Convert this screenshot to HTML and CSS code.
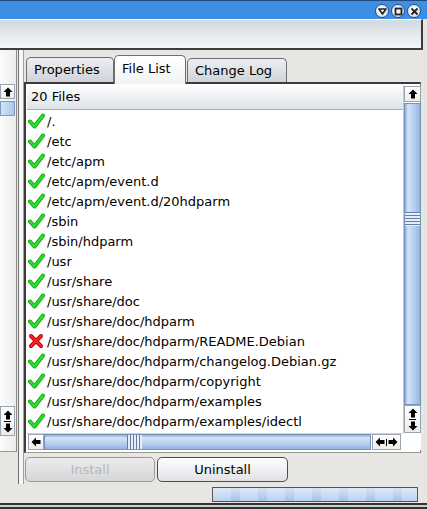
FILE: index.html
```html
<!DOCTYPE html>
<html>
<head>
<meta charset="utf-8">
<link rel="stylesheet" href="styles.css">
</head>
<body>
<div class="titlebar">
  <span class="wbtn"><svg width="9" height="9" viewBox="0 0 9 9"><polygon points="1,2 8,2 4.5,7" fill="none" stroke="#222" stroke-width="1.6" stroke-linejoin="round"/></svg></span>
  <span class="wbtn"><svg width="9" height="9" viewBox="0 0 9 9"><rect x="1.5" y="1.5" width="6" height="6" fill="none" stroke="#222" stroke-width="1.8"/></svg></span>
  <span class="wbtn"><svg width="9" height="9" viewBox="0 0 9 9"><path d="M1.5 1.5 L7.5 7.5 M7.5 1.5 L1.5 7.5" stroke="#222" stroke-width="1.8"/></svg></span>
</div>
<div class="toolbar"></div>
<div class="main">
  <div class="leftpane">
    <div class="lscroll">
      <div class="abox up"><svg width="10" height="10" viewBox="0 0 10 10"><polygon points="5,0.5 9.5,5 7,5 7,9.5 3,9.5 3,5 0.5,5" fill="#000"/></svg></div>
      <div class="lthumb"></div>
      <div class="lspace"></div>
      <div class="abox pair">
        <svg width="10" height="10" viewBox="0 0 10 10"><polygon points="5,0.5 9.5,5 7,5 7,9.5 3,9.5 3,5 0.5,5" fill="#000"/></svg>
        <span class="dash"></span>
        <svg width="10" height="10" viewBox="0 0 10 10"><polygon points="5,9.5 9.5,5 7,5 7,0.5 3,0.5 3,5 0.5,5" fill="#000"/></svg>
      </div>
    </div>
  </div>
  <div class="splitter"></div>
  <div class="rightpane">
    <div class="tabs">
      <div class="tab t1">Properties</div>
      <div class="tab t2 sel">File List</div>
      <div class="tab t3">Change Log</div>
    </div>
    <div class="panel">
      <div class="grid">
        <div class="list">
          <div class="lhead">20 Files</div>
          <div class="rows">
            <div class="row"><svg class="ok" width="17" height="16" viewBox="0 0 17 16"><path d="M2 8.5 L6.5 13.5 L15 2.5" fill="none" stroke="#0f9a0f" stroke-width="4" stroke-linejoin="round" stroke-linecap="round"/><path d="M2 8.5 L6.5 13.5 L15 2.5" fill="none" stroke="#2ee02e" stroke-width="2.4" stroke-linejoin="round" stroke-linecap="round"/></svg>/.</div>
            <div class="row"><svg class="ok" width="17" height="16" viewBox="0 0 17 16"><path d="M2 8.5 L6.5 13.5 L15 2.5" fill="none" stroke="#0f9a0f" stroke-width="4" stroke-linejoin="round" stroke-linecap="round"/><path d="M2 8.5 L6.5 13.5 L15 2.5" fill="none" stroke="#2ee02e" stroke-width="2.4" stroke-linejoin="round" stroke-linecap="round"/></svg>/etc</div>
            <div class="row"><svg class="ok" width="17" height="16" viewBox="0 0 17 16"><path d="M2 8.5 L6.5 13.5 L15 2.5" fill="none" stroke="#0f9a0f" stroke-width="4" stroke-linejoin="round" stroke-linecap="round"/><path d="M2 8.5 L6.5 13.5 L15 2.5" fill="none" stroke="#2ee02e" stroke-width="2.4" stroke-linejoin="round" stroke-linecap="round"/></svg>/etc/apm</div>
            <div class="row"><svg class="ok" width="17" height="16" viewBox="0 0 17 16"><path d="M2 8.5 L6.5 13.5 L15 2.5" fill="none" stroke="#0f9a0f" stroke-width="4" stroke-linejoin="round" stroke-linecap="round"/><path d="M2 8.5 L6.5 13.5 L15 2.5" fill="none" stroke="#2ee02e" stroke-width="2.4" stroke-linejoin="round" stroke-linecap="round"/></svg>/etc/apm/event.d</div>
            <div class="row"><svg class="ok" width="17" height="16" viewBox="0 0 17 16"><path d="M2 8.5 L6.5 13.5 L15 2.5" fill="none" stroke="#0f9a0f" stroke-width="4" stroke-linejoin="round" stroke-linecap="round"/><path d="M2 8.5 L6.5 13.5 L15 2.5" fill="none" stroke="#2ee02e" stroke-width="2.4" stroke-linejoin="round" stroke-linecap="round"/></svg>/etc/apm/event.d/20hdparm</div>
            <div class="row"><svg class="ok" width="17" height="16" viewBox="0 0 17 16"><path d="M2 8.5 L6.5 13.5 L15 2.5" fill="none" stroke="#0f9a0f" stroke-width="4" stroke-linejoin="round" stroke-linecap="round"/><path d="M2 8.5 L6.5 13.5 L15 2.5" fill="none" stroke="#2ee02e" stroke-width="2.4" stroke-linejoin="round" stroke-linecap="round"/></svg>/sbin</div>
            <div class="row"><svg class="ok" width="17" height="16" viewBox="0 0 17 16"><path d="M2 8.5 L6.5 13.5 L15 2.5" fill="none" stroke="#0f9a0f" stroke-width="4" stroke-linejoin="round" stroke-linecap="round"/><path d="M2 8.5 L6.5 13.5 L15 2.5" fill="none" stroke="#2ee02e" stroke-width="2.4" stroke-linejoin="round" stroke-linecap="round"/></svg>/sbin/hdparm</div>
            <div class="row"><svg class="ok" width="17" height="16" viewBox="0 0 17 16"><path d="M2 8.5 L6.5 13.5 L15 2.5" fill="none" stroke="#0f9a0f" stroke-width="4" stroke-linejoin="round" stroke-linecap="round"/><path d="M2 8.5 L6.5 13.5 L15 2.5" fill="none" stroke="#2ee02e" stroke-width="2.4" stroke-linejoin="round" stroke-linecap="round"/></svg>/usr</div>
            <div class="row"><svg class="ok" width="17" height="16" viewBox="0 0 17 16"><path d="M2 8.5 L6.5 13.5 L15 2.5" fill="none" stroke="#0f9a0f" stroke-width="4" stroke-linejoin="round" stroke-linecap="round"/><path d="M2 8.5 L6.5 13.5 L15 2.5" fill="none" stroke="#2ee02e" stroke-width="2.4" stroke-linejoin="round" stroke-linecap="round"/></svg>/usr/share</div>
            <div class="row"><svg class="ok" width="17" height="16" viewBox="0 0 17 16"><path d="M2 8.5 L6.5 13.5 L15 2.5" fill="none" stroke="#0f9a0f" stroke-width="4" stroke-linejoin="round" stroke-linecap="round"/><path d="M2 8.5 L6.5 13.5 L15 2.5" fill="none" stroke="#2ee02e" stroke-width="2.4" stroke-linejoin="round" stroke-linecap="round"/></svg>/usr/share/doc</div>
            <div class="row"><svg class="ok" width="17" height="16" viewBox="0 0 17 16"><path d="M2 8.5 L6.5 13.5 L15 2.5" fill="none" stroke="#0f9a0f" stroke-width="4" stroke-linejoin="round" stroke-linecap="round"/><path d="M2 8.5 L6.5 13.5 L15 2.5" fill="none" stroke="#2ee02e" stroke-width="2.4" stroke-linejoin="round" stroke-linecap="round"/></svg>/usr/share/doc/hdparm</div>
            <div class="row"><svg class="ok" width="17" height="16" viewBox="0 0 17 16"><path d="M3 3 L13 13 M13 3 L3 13" fill="none" stroke="#b00000" stroke-width="4" stroke-linecap="round"/><path d="M3 3 L13 13 M13 3 L3 13" fill="none" stroke="#ff2020" stroke-width="2.4" stroke-linecap="round"/></svg>/usr/share/doc/hdparm/README.Debian</div>
            <div class="row"><svg class="ok" width="17" height="16" viewBox="0 0 17 16"><path d="M2 8.5 L6.5 13.5 L15 2.5" fill="none" stroke="#0f9a0f" stroke-width="4" stroke-linejoin="round" stroke-linecap="round"/><path d="M2 8.5 L6.5 13.5 L15 2.5" fill="none" stroke="#2ee02e" stroke-width="2.4" stroke-linejoin="round" stroke-linecap="round"/></svg>/usr/share/doc/hdparm/changelog.Debian.gz</div>
            <div class="row"><svg class="ok" width="17" height="16" viewBox="0 0 17 16"><path d="M2 8.5 L6.5 13.5 L15 2.5" fill="none" stroke="#0f9a0f" stroke-width="4" stroke-linejoin="round" stroke-linecap="round"/><path d="M2 8.5 L6.5 13.5 L15 2.5" fill="none" stroke="#2ee02e" stroke-width="2.4" stroke-linejoin="round" stroke-linecap="round"/></svg>/usr/share/doc/hdparm/copyright</div>
            <div class="row"><svg class="ok" width="17" height="16" viewBox="0 0 17 16"><path d="M2 8.5 L6.5 13.5 L15 2.5" fill="none" stroke="#0f9a0f" stroke-width="4" stroke-linejoin="round" stroke-linecap="round"/><path d="M2 8.5 L6.5 13.5 L15 2.5" fill="none" stroke="#2ee02e" stroke-width="2.4" stroke-linejoin="round" stroke-linecap="round"/></svg>/usr/share/doc/hdparm/examples</div>
            <div class="row"><svg class="ok" width="17" height="16" viewBox="0 0 17 16"><path d="M2 8.5 L6.5 13.5 L15 2.5" fill="none" stroke="#0f9a0f" stroke-width="4" stroke-linejoin="round" stroke-linecap="round"/><path d="M2 8.5 L6.5 13.5 L15 2.5" fill="none" stroke="#2ee02e" stroke-width="2.4" stroke-linejoin="round" stroke-linecap="round"/></svg>/usr/share/doc/hdparm/examples/idectl</div>
          </div>
        </div>
        <div class="vscroll">
          <div class="abox vup"><svg width="10" height="10" viewBox="0 0 10 10"><polygon points="5,0.5 9.5,5 7,5 7,9.5 3,9.5 3,5 0.5,5" fill="#000"/></svg></div>
          <div class="vthumb"><div class="vgrip"></div></div>
          <div class="abox vpair">
            <svg width="10" height="10" viewBox="0 0 10 10"><polygon points="5,0.5 9.5,5 7,5 7,9.5 3,9.5 3,5 0.5,5" fill="#000"/></svg>
            <span class="dash"></span>
            <svg width="10" height="10" viewBox="0 0 10 10"><polygon points="5,9.5 9.5,5 7,5 7,0.5 3,0.5 3,5 0.5,5" fill="#000"/></svg>
          </div>
        </div>
        <div class="hscroll">
          <div class="abox hleft"><svg width="10" height="10" viewBox="0 0 10 10"><polygon points="0.5,5 5,0.5 5,3 9.5,3 9.5,7 5,7 5,9.5" fill="#000"/></svg></div>
          <div class="hthumb"><div class="hgrip"></div></div>
          <div class="abox hpair">
            <svg width="10" height="10" viewBox="0 0 10 10"><polygon points="0.5,5 5,0.5 5,3 9.5,3 9.5,7 5,7 5,9.5" fill="#000"/></svg>
            <span class="vdash"></span>
            <svg width="10" height="10" viewBox="0 0 10 10"><polygon points="9.5,5 5,0.5 5,3 0.5,3 0.5,7 5,7 5,9.5" fill="#000"/></svg>
          </div>
        </div>
        <div class="corner"></div>
      </div>
    </div>
    <div class="buttons">
      <div class="btn disabled">Install</div>
      <div class="btn">Uninstall</div>
    </div>
  </div>
</div>
<div class="status">
  <div class="progress"></div>
</div>
<div class="frame-bottom"></div>
</body>
</html>
```

FILE: styles.css
```css
* { box-sizing: border-box; }
html, body { margin: 0; padding: 0; }
body {
  width: 427px;
  height: 509px;
  overflow: hidden;
  background: #e7e6e3;
  font-family: "DejaVu Sans", "Noto Sans", sans-serif;
  font-size: 13px;
  color: #000;
}
.titlebar {
  height: 19px;
  background: #3d8fe6;
  border-top: 1px solid #224a7c;
  display: flex;
  justify-content: flex-end;
  align-items: center;
  gap: 2px;
  padding: 2px 6px 0 0;
}
.wbtn {
  width: 14px;
  height: 14px;
  border-radius: 50%;
  background: radial-gradient(circle at 40% 35%, #ffffff, #c9d6e6);
  border: 1px solid #2a4f80;
  display: flex;
  align-items: center;
  justify-content: center;
}
.toolbar {
  height: 31px;
  width: 423px;
  background: linear-gradient(#d3d9e1, #f5f6f8);
  border-top: 1px solid #ffffff;
  border-right: 2px solid #3a3a3a;
  border-bottom: 2px solid #3e3e3e;
}
.main {
  display: flex;
  height: 435px;
}
.leftpane {
  width: 17px;
  height: 402px;
  background: linear-gradient(to right, #fbfbfb, #ececec);
  border-right: 1px solid #8c8c8c;
  border-bottom: 1px solid #9a9a9a;
}
.lscroll {
  display: flex;
  flex-direction: column;
  width: 16px;
  height: 100%;
  padding-top: 34px;
}
.abox {
  background: linear-gradient(#ffffff, #ececec);
  border: 1px solid #9aa4b0;
  display: flex;
  align-items: center;
  justify-content: center;
}
.abox.up { height: 15px; width: 15px; }
.lthumb {
  margin-top: 2px;
  height: 15px;
  width: 15px;
  background: linear-gradient(to right, #d5e4f6, #a9c6ec);
  border: 1px solid #7e9cc2;
}
.lspace { flex: 1; }
.abox.pair, .abox.vpair {
  flex-direction: column;
  height: 30px;
  width: 15px;
  gap: 1px;
  margin-bottom: 15px;
}
.dash { width: 7px; height: 1px; background: #000; }
.vdash { width: 1px; height: 7px; background: #000; margin: 0 1px; }
.splitter {
  width: 6px;
  height: 434px;
  margin-left: 1px;
  background: #f6f6f6;
  border-left: 1px solid #707070;
  border-right: 1px solid #a0a0a0;
}
.rightpane {
  width: 398px;
  display: flex;
  flex-direction: column;
}
.tabs {
  height: 32px;
  display: flex;
  align-items: flex-end;
  padding-left: 2px;
}
.tab {
  border: 1px solid #6e6e6e;
  border-bottom: none;
  border-radius: 5px 5px 0 0;
  background: linear-gradient(#eceef2, #cfd4da);
  padding: 0 7px;
  line-height: 24px;
  height: 25px;
}
.tab.t1 { width: 88px; }
.tab.t2 { width: 72px; height: 29px; line-height: 26px; background: linear-gradient(#ffffff, #f3f3f3); margin-bottom: -2px; position: relative; z-index: 1; }
.tab.t3 { width: 100px; height: 24px; line-height: 23px; margin-left: 1px; }
.panel {
  height: 371px;
  width: 397px;
  border-top: 2px solid #3c3c3c;
  border-left: 2px solid #3c3c3c;
  border-right: 1px solid #7a7a7a;
  border-bottom: 1px solid #9a9a9a;
  background: #ffffff;
  padding: 1px 0 0 1px;
}
.grid {
  display: grid;
  grid-template-columns: 376px 18px;
  grid-template-rows: 348px 17px;
  height: 100%;
}
.list {
  overflow: hidden;
  background: #fff;
}
.lhead {
  height: 25px;
  line-height: 24px;
  padding-left: 4px;
  background: linear-gradient(#ffffff, #dde3ea);
  border-bottom: 1px solid #a8adb3;
}
.rows { padding-top: 1px; }
.row {
  height: 20px;
  display: flex;
  align-items: center;
  white-space: nowrap;
}
.ok { margin: 0 2px 0 1px; flex: none; }
.vscroll {
  display: flex;
  flex-direction: column;
  padding-top: 1px;
  border-left: 1px solid #c8c8c8;
}
.abox.vup { height: 16px; width: 17px; }
.vthumb {
  flex: 1;
  width: 17px;
  margin-top: 1px;
  background: linear-gradient(to right, #8eaed4, #d3e3f7 20%, #b7d0f0 60%, #93b4dc);
  border: 1px solid #7694bb;
  display: flex;
  align-items: center;
  padding-bottom: 70px;
}
.vgrip {
  width: 100%;
  height: 14px;
  background: repeating-linear-gradient(#5f7fa8 0 1px, #e6eef9 1px 3px);
}
.abox.vpair {
  height: 28px;
  width: 17px;
  margin-bottom: 0;
}
.hscroll {
  display: flex;
  padding-left: 1px;
  border-top: 1px solid #d0d0d0;
}
.abox.hleft { width: 16px; height: 16px; }
.hthumb {
  width: 327px;
  height: 16px;
  background: linear-gradient(#8eaed4, #d3e3f7 20%, #b7d0f0 60%, #93b4dc);
  border: 1px solid #7694bb;
  padding-left: 82px;
}
.hgrip {
  width: 15px;
  height: 100%;
  background: repeating-linear-gradient(to right, #5f7fa8 0 1px, #e6eef9 1px 3px);
}
.abox.hpair { width: 29px; height: 16px; margin-left: 1px; }
.corner { background: #fff; }
.buttons {
  display: flex;
  gap: 2px;
  padding: 4px 0 0 1px;
}
.btn {
  height: 25px;
  width: 131px;
  text-align: center;
  line-height: 23px;
  border: 1px solid #4d4d4d;
  border-radius: 5px;
  background: linear-gradient(#ffffff, #dfe1e4);
}
.btn.disabled {
  width: 130px;
  color: #b9b9b9;
  border-color: #9a9a9a;
  background: linear-gradient(#ececec, #d4d6d9);
}
.status {
  height: 18px;
  display: flex;
  justify-content: flex-end;
  align-items: center;
  padding-right: 9px;
}
.progress {
  width: 206px;
  height: 15px;
  border: 1px solid #555;
  background:
    repeating-linear-gradient(to right, rgba(255,255,255,0.25) 0 18px, rgba(255,255,255,0) 18px 27px),
    linear-gradient(#d3e3f6, #a5c3ea);
}
.frame-bottom {
  height: 6px;
  border-top: 2px solid #333;
  border-bottom: 2px solid #333;
  background: #cfcfcf;
}
```
